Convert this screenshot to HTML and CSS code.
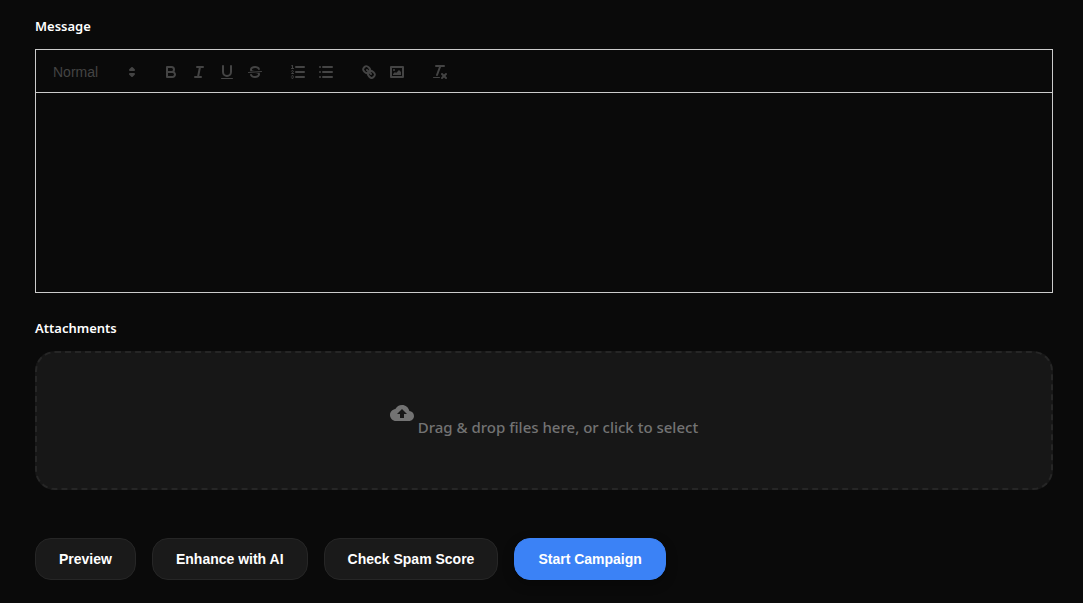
FILE: index.html
```html
<!DOCTYPE html>
<html lang="en">
<head>
  <meta charset="UTF-8" />
  <meta name="viewport" content="width=device-width, initial-scale=1.0"/>
  <title>New Campaign</title>
  <link rel="stylesheet" href="styles.css">
</head>
<body>

  <form class="campaign-form">
    <div class="form-group">
      <label for="message">Message</label>
      <div class="editor">
        <div class="toolbar">
          <span class="formats picker">
            <select class="picker-select" aria-label="Text style">
              <option>Normal</option>
              <option>Heading 1</option>
              <option>Heading 2</option>
            </select>
            <svg class="picker-arrow" viewBox="0 0 18 18"><polygon class="fill stroke" points="7 11 9 13 11 11 7 11"/><polygon class="fill stroke" points="7 7 9 5 11 7 7 7"/></svg>
          </span>
          <span class="formats">
            <button type="button" class="tool" aria-label="Bold">
              <svg viewBox="0 0 18 18"><path class="stroke" d="M5,4H9.5A2.5,2.5,0,0,1,12,6.5v0A2.5,2.5,0,0,1,9.5,9H5A0,0,0,0,1,5,9V4A0,0,0,0,1,5,4Z"/><path class="stroke" d="M5,9h5.5A2.5,2.5,0,0,1,13,11.5v0A2.5,2.5,0,0,1,10.5,14H5a0,0,0,0,1,0,0V9A0,0,0,0,1,5,9Z"/></svg>
            </button>
            <button type="button" class="tool" aria-label="Italic">
              <svg viewBox="0 0 18 18"><line class="stroke" x1="7" x2="13" y1="4" y2="4"/><line class="stroke" x1="5" x2="11" y1="14" y2="14"/><line class="stroke" x1="8" x2="10" y1="14" y2="4"/></svg>
            </button>
            <button type="button" class="tool" aria-label="Underline">
              <svg viewBox="0 0 18 18"><path class="stroke" d="M5,3V9a4.012,4.012,0,0,0,4,4H9a4.012,4.012,0,0,0,4-4V3"/><rect class="fill" height="1" rx="0.5" ry="0.5" width="12" x="3" y="15"/></svg>
            </button>
            <button type="button" class="tool" aria-label="Strikethrough">
              <svg viewBox="0 0 18 18"><line class="stroke thin" x1="15.5" x2="2.5" y1="8.5" y2="9.5"/><path class="fill" d="M9.007,8C6.542,7.791,6,7.519,6,6.5,6,5.792,7.283,5,9,5c1.571,0,2.765.679,2.969,1.309a1,1,0,0,0,1.9-.617C13.356,4.106,11.354,3,9,3,6.2,3,4,4.538,4,6.5a3.2,3.2,0,0,0,.5,1.843Z"/><path class="fill" d="M8.984,10C11.457,10.208,12,10.479,12,11.5c0,0.708-1.283,1.5-3,1.5-1.571,0-2.765-.679-2.969-1.309a1,1,0,1,0-1.9.617C4.644,13.894,6.646,15,9,15c2.8,0,5-1.538,5-3.5a3.2,3.2,0,0,0-.5-1.843Z"/></svg>
            </button>
          </span>
          <span class="formats">
            <button type="button" class="tool" aria-label="Numbered list">
              <svg viewBox="0 0 18 18"><line class="stroke" x1="7" x2="15" y1="4" y2="4"/><line class="stroke" x1="7" x2="15" y1="9" y2="9"/><line class="stroke" x1="7" x2="15" y1="14" y2="14"/><line class="stroke thin" x1="2.5" x2="4.5" y1="5.5" y2="5.5"/><path class="fill" d="M3.5,6A0.5,0.5,0,0,1,3,5.5V3.085l-0.276.138A0.5,0.5,0,0,1,2.053,3c-0.124-.247-0.023-0.324.224-0.447l1-.5A0.5,0.5,0,0,1,4,2.5v3A0.5,0.5,0,0,1,3.5,6Z"/><path class="stroke thin" d="M4.5,10.5h-2c0-.234,1.85-1.076,1.85-2.234A0.959,0.959,0,0,0,2.5,8.156"/><path class="stroke thin" d="M2.5,14.846a0.959,0.959,0,0,0,1.85-.109A0.7,0.7,0,0,0,3.75,14a0.688,0.688,0,0,0,.6-0.736,0.959,0.959,0,0,0-1.85-.109"/></svg>
            </button>
            <button type="button" class="tool" aria-label="Bulleted list">
              <svg viewBox="0 0 18 18"><line class="stroke" x1="6" x2="15" y1="4" y2="4"/><line class="stroke" x1="6" x2="15" y1="9" y2="9"/><line class="stroke" x1="6" x2="15" y1="14" y2="14"/><line class="stroke" x1="3" x2="3" y1="4" y2="4"/><line class="stroke" x1="3" x2="3" y1="9" y2="9"/><line class="stroke" x1="3" x2="3" y1="14" y2="14"/></svg>
            </button>
          </span>
          <span class="formats">
            <button type="button" class="tool" aria-label="Link">
              <svg viewBox="0 0 18 18"><line class="stroke" x1="7" x2="11" y1="7" y2="11"/><path class="stroke" d="M8.9,4.577a3.476,3.476,0,0,1,.36,4.679A3.476,3.476,0,0,1,4.577,8.9C3.185,7.5,2.035,6.4,4.217,4.217S7.5,3.185,8.9,4.577Z"/><path class="stroke" d="M13.423,9.1a3.476,3.476,0,0,0-4.679-.36,3.476,3.476,0,0,0,.36,4.679c1.392,1.392,2.5,2.542,4.679.36S14.815,10.5,13.423,9.1Z"/></svg>
            </button>
            <button type="button" class="tool" aria-label="Image">
              <svg viewBox="0 0 18 18"><rect class="stroke" height="10" width="12" x="3" y="4"/><circle class="fill" cx="6" cy="7" r="1"/><polyline class="fill" points="5 12 5 11 7 9 8 10 11 7 13 9 13 12 5 12"/></svg>
            </button>
          </span>
          <span class="formats">
            <button type="button" class="tool" aria-label="Clear formatting">
              <svg viewBox="0 0 18 18"><line class="stroke" x1="5" x2="13" y1="3" y2="3"/><line class="stroke" x1="6" x2="9.35" y1="12" y2="3"/><line class="stroke" x1="11" x2="15" y1="11" y2="15"/><line class="stroke" x1="15" x2="11" y1="11" y2="15"/><rect class="fill" height="1" rx="0.5" ry="0.5" width="7" x="2" y="14"/></svg>
            </button>
          </span>
        </div>
        <textarea id="message" class="editor-text"></textarea>
      </div>
    </div>

    <div class="form-group">
      <label for="attachments">Attachments</label>
      <label class="dropzone" for="attachments">
        <svg class="upload-icon" viewBox="0 0 24 24"><path d="M19.35 10.04C18.67 6.59 15.64 4 12 4 9.11 4 6.6 5.64 5.35 8.04 2.34 8.36 0 10.91 0 14c0 3.31 2.69 6 6 6h13c2.76 0 5-2.24 5-5 0-2.64-2.05-4.78-4.65-4.96zM14 13v4h-4v-4H7l5-5 5 5h-3z"/></svg>
        <span>Drag &amp; drop files here, or click to select</span>
      </label>
      <input type="file" id="attachments" class="file-input" multiple />
    </div>

    <div class="actions">
      <button type="button" class="btn">Preview</button>
      <button type="button" class="btn">Enhance with AI</button>
      <button type="button" class="btn">Check Spam Score</button>
      <button type="submit" class="btn btn-primary">Start Campaign</button>
    </div>
  </form>

</body>
</html>
```
FILE: styles.css
```css
* {
  box-sizing: border-box;
}
body {
  margin: 0;
  background: #0a0a0a;
  color: #fff;
  font-family: "Segoe UI", "Noto Sans", sans-serif;
  font-size: 16px;
  line-height: 26px;
}
.campaign-form {
  padding: 16px 30px 20px 35px;
}
.form-group {
  margin-bottom: 25px;
}
.form-group > label:first-child {
  display: block;
  margin-bottom: 12px;
  font-size: 13px;
  font-weight: 600;
  line-height: 21px;
}

/* editor */
.toolbar {
  display: flex;
  flex-wrap: wrap;
  gap: 15px;
  padding: 10px 9px 8px;
  border: 1px solid #ccc;
}
.formats {
  display: flex;
}
.picker {
  position: relative;
  width: 97px;
}
.picker-select {
  width: 100%;
  height: 24px;
  padding: 0 20px 0 8px;
  border: none;
  background: transparent;
  color: #444;
  font-family: Arial, "Liberation Sans", sans-serif;
  font-size: 14px;
  font-weight: 500;
  appearance: none;
}
.picker-arrow {
  position: absolute;
  top: 3px;
  right: 1px;
  width: 18px;
  height: 18px;
  pointer-events: none;
}
.tool {
  width: 28px;
  height: 24px;
  padding: 3px 5px;
  border: none;
  background: none;
  cursor: pointer;
}
.tool svg {
  display: block;
  width: 18px;
  height: 18px;
}
.stroke {
  fill: none;
  stroke: #444;
  stroke-linecap: round;
  stroke-linejoin: round;
  stroke-width: 2;
}
.thin {
  stroke-width: 1;
}
.fill {
  fill: #444;
}
.editor-text {
  display: block;
  width: 100%;
  height: 200px;
  padding: 12px 15px;
  border: 1px solid #ccc;
  border-top: none;
  background: transparent;
  color: #fff;
  font-family: Arial, "Liberation Sans", sans-serif;
  font-size: 13px;
  resize: none;
  outline: none;
}

/* attachments */
.dropzone {
  display: block;
  padding: 48px;
  border: 2px dashed #262626;
  border-radius: 20px;
  background: #171717;
  color: #737373;
  font-size: 15px;
  font-weight: 500;
  text-align: center;
  cursor: pointer;
}
.upload-icon {
  width: 24px;
  height: 24px;
  margin-bottom: 8px;
  fill: #737373;
  vertical-align: baseline;
}
.file-input {
  display: none;
}

/* buttons */
.actions {
  display: flex;
  flex-wrap: wrap;
  gap: 16px;
  padding-top: 23px;
}
.btn {
  height: 42px;
  padding: 0 23px;
  border: 1px solid #262626;
  border-radius: 16px;
  background: #1a1a1a;
  color: #fff;
  font-family: Arial, "Liberation Sans", sans-serif;
  font-size: 14px;
  font-weight: 600;
  cursor: pointer;
}
.btn:hover {
  background: #222;
}
.btn-primary,
.btn-primary:hover {
  border-color: #3b82f6;
  background: #3b82f6;
  box-shadow: 0 4px 12px rgba(0, 0, 0, 0.3);
}
```
